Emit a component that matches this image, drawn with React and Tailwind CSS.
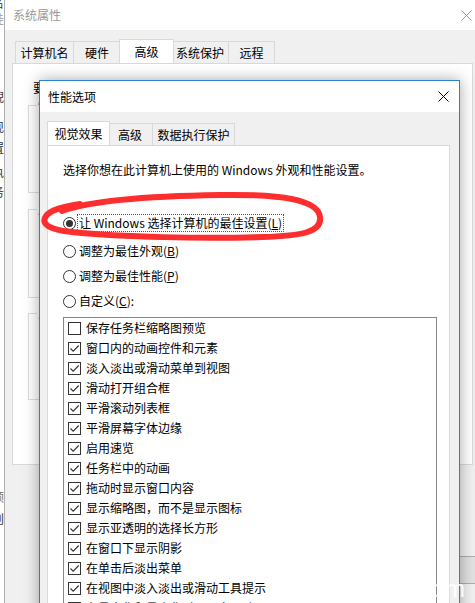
import React from 'react';

const items = [
    { label: '保存任务栏缩略图预览', checked: false },
    { label: '窗口内的动画控件和元素', checked: true },
    { label: '淡入淡出或滑动菜单到视图', checked: true },
    { label: '滑动打开组合框', checked: true },
    { label: '平滑滚动列表框', checked: true },
    { label: '平滑屏幕字体边缘', checked: true },
    { label: '启用速览', checked: true },
    { label: '任务栏中的动画', checked: true },
    { label: '拖动时显示窗口内容', checked: true },
    { label: '显示缩略图，而不是显示图标', checked: true },
    { label: '显示亚透明的选择长方形', checked: true },
    { label: '在窗口下显示阴影', checked: true },
    { label: '在单击后淡出菜单', checked: true },
    { label: '在视图中淡入淡出或滑动工具提示', checked: true },
    { label: '在最大化和最小化时显示窗口动画', checked: true },
];

const CloseIcon = ({ color = '#000' }) => (
    <svg width="11" height="11" viewBox="0 0 11 11">
        <path d="M0.5 0.5 L10.5 10.5 M10.5 0.5 L0.5 10.5" stroke={color} strokeWidth="1" fill="none" />
    </svg>
);

const Tab = ({ label, active, width }) => (
    <div
        className={
            active
                ? 'h-[24px] -mx-[2px] relative z-10 bg-white border border-b-0 border-[#d9d9d9] flex items-center justify-center'
                : 'h-[22px] bg-[#f0f0f0] border border-b-0 border-[#d9d9d9] -ml-px first:ml-0 flex items-center justify-center'
        }
        style={{ width }}
    >
        <span className="leading-[14px]">{label}</span>
    </div>
);

const Radio = ({ checked, children, focus }) => (
    <div className="h-[18px] flex items-center">
        <div className="w-[13px] h-[13px] rounded-full border border-[#333] bg-white flex items-center justify-center">
            {checked && <div className="w-[7px] h-[7px] rounded-full bg-[#333]" />}
        </div>
        <div
            className={
                'ml-[1px] h-[18px] px-[1px] flex items-center border ' +
                (focus ? 'border-dotted border-[#555]' : 'border-transparent')
            }
        >
            <span className="leading-[14px]">{children}</span>
        </div>
    </div>
);

const Checkbox = ({ checked, label }) => (
    <div className="h-[20px] flex items-center pl-[4px] gap-[5px]">
        <div className="w-[13px] h-[13px] border border-[#333] bg-white flex items-center justify-center">
            {checked && (
                <svg width="11" height="11" viewBox="0 0 11 11">
                    <path d="M1.5 5.5 L4.2 8.2 L9.7 2.5" stroke="#333" strokeWidth="1.1" fill="none" />
                </svg>
            )}
        </div>
        <span className="leading-[14px] whitespace-nowrap">{label}</span>
    </div>
);

const GroupBox = ({ title, height, className }) => (
    <div className={'relative ml-[15px] mr-[15px] border border-[#dcdcdc] ' + className} style={{ height }}>
        <span className="absolute -top-[8px] left-[8px] bg-white px-[1px] leading-[14px] text-[#1e3287]">{title}</span>
    </div>
);

export default function App() {
    return (
        <div className="relative w-[475px] h-[603px] overflow-hidden bg-white text-[12px] text-black font-['Noto_Sans_CJK_SC','Noto_Sans',sans-serif]">
            {/* window behind everything, only a sliver shows */}
            <div className="absolute left-[-8px] top-0 w-[12px] h-full text-[#333] leading-[14px]">
                <span className="absolute top-[-4px]">名</span>
                <span className="absolute top-[12px] text-[#999]">桂</span>
                <span className="absolute top-[90px]">棿</span>
                <span className="absolute top-[120px]">现</span>
                <span className="absolute top-[141px]">置</span>
                <span className="absolute top-[165px]">执</span>
                <span className="absolute top-[185px]">务</span>
                <span className="absolute top-[490px] text-[#777]">预</span>
                <span className="absolute top-[512px]">创</span>
            </div>

            {/* 系统属性 */}
            <div className="absolute left-[4px] top-0 w-[475px] h-[603px] border-l border-[#b0b0b0] bg-[#f0f0f0] flex flex-col">
                <div className="h-[30px] bg-white flex items-center justify-between pl-[8px] pr-[7px] shrink-0">
                    <span className="text-[#999] leading-[14px]">系统属性</span>
                    <CloseIcon color="#999" />
                </div>
                <div className="mt-[9px] ml-[10px] flex items-end h-[24px] shrink-0">
                    <Tab label="计算机名" width={59} />
                    <Tab label="硬件" width={48} />
                    <Tab label="高级" width={55} active />
                    <Tab label="系统保护" width={58} />
                    <Tab label="远程" width={47} />
                </div>
                <div className="ml-[7px] w-[461px] h-[402px] bg-white border border-[#d9d9d9] pt-[16px] shrink-0">
                    <div className="pl-[20px] leading-[16px] h-[16px]">要进行大多数更改，你必须作为管理员登录。</div>
                    <GroupBox title="性能" height={88} className="mt-[9px]" />
                    <GroupBox title="用户配置文件" height={89} className="mt-[16px]" />
                    <GroupBox title="启动和故障恢复" height={87} className="mt-[15px]" />
                </div>
                <div className="mt-[91px] flex justify-end gap-[8px] pr-[0px]">
                    <div className="w-[75px] h-[28px] bg-[#cccccc] border border-[#adadad]" />
                    <div className="w-[30px] h-[28px] bg-[#e1e1e1] border border-[#adadad]" />
                </div>
            </div>

            {/* 性能选项 */}
            <div className="absolute left-[39px] top-[80px] w-[421px] h-[560px] border border-[#2b7fd3] bg-[#f0f0f0] shadow-[0_0_14px_rgba(0,0,0,0.35)] flex flex-col">
                <div className="h-[31px] bg-white flex items-center justify-between pl-[8px] pr-[10px] shrink-0">
                    <span className="leading-[14px]">性能选项</span>
                    <CloseIcon />
                </div>
                <div className="mt-[9px] ml-[9px] flex items-end h-[24px] shrink-0">
                    <Tab label="视觉效果" width={63} active />
                    <Tab label="高级" width={46} />
                    <Tab label="数据执行保护" width={83} />
                </div>
                <div className="ml-[7px] w-[403px] flex-1 bg-white border border-[#d9d9d9] pl-[15px] pt-[16px]">
                    <div className="h-[16px] leading-[16px]">选择你想在此计算机上使用的 Windows 外观和性能设置。</div>
                    <div className="mt-[36px]">
                        <Radio checked focus>
                            让 Windows 选择计算机的最佳设置(<u>L</u>)
                        </Radio>
                    </div>
                    <div className="mt-[10px]">
                        <Radio>
                            调整为最佳外观(<u>B</u>)
                        </Radio>
                    </div>
                    <div className="mt-[7px]">
                        <Radio>
                            调整为最佳性能(<u>P</u>)
                        </Radio>
                    </div>
                    <div className="mt-[7px]">
                        <Radio>
                            自定义(<u>C</u>):
                        </Radio>
                    </div>
                    <div className="mt-[7px] w-[374px] h-[400px] border border-[#828790] bg-white">
                        {items.map((it) => (
                            <Checkbox key={it.label} label={it.label} checked={it.checked} />
                        ))}
                    </div>
                </div>
            </div>

            {/* red hand-drawn annotation */}
            <svg className="absolute left-0 top-0 pointer-events-none" width="475" height="603" viewBox="0 0 475 603">
                <path
                    d="M62 211 C92 200 152 196 220 195 C282 194 318 200 320 217 C322 232 302 236 262 237 C202 239 122 237 72 232 C50 230 40 224 46 216 C50 210 62 207 80 204"
                    stroke="#ff2e2e"
                    strokeWidth="6"
                    strokeLinecap="round"
                    fill="none"
                />
            </svg>

            {/* watermark */}
            <div className="absolute right-[10px] bottom-[2px] text-[24px] leading-[24px] text-white/90 font-['Liberation_Sans',sans-serif]">
                .com
            </div>
        </div>
    );
}
